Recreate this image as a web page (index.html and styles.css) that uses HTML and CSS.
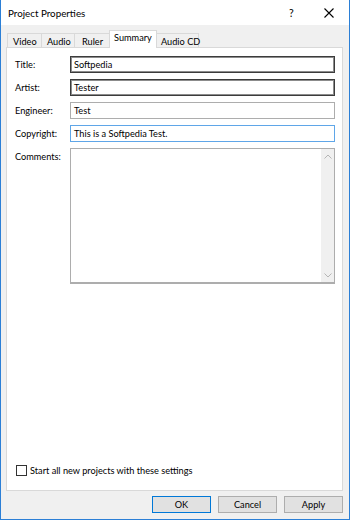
FILE: index.html
```html
<!DOCTYPE html>
<html lang="en">
<head>
    <meta charset="UTF-8">
    <meta name="viewport" content="width=device-width, initial-scale=1.0">
    <title>Project Properties</title>
    <link rel="stylesheet" href="styles.css">
</head>
<body>
    <div class="window">
        <div class="titlebar">
            <span class="title">Project Properties</span>
            <span class="help">?</span>
            <span class="close">
                <svg width="10" height="10" viewBox="0 0 10 10"><path d="M0.5 0.5L9.5 9.5M9.5 0.5L0.5 9.5" stroke="#000" stroke-width="1.1" fill="none"/></svg>
            </span>
        </div>
        <div class="content">
            <div class="tabs">
                <div class="tab tab-video">Video</div>
                <div class="tab tab-audio">Audio</div>
                <div class="tab tab-ruler">Ruler</div>
                <div class="tab tab-summary active">Summary</div>
                <div class="tab tab-cd">Audio CD</div>
            </div>
            <div class="panel">
                <div class="fields">
                    <label class="label">Title:</label>
                    <div class="input dark">Softpedia</div>
                    <label class="label">Artist:</label>
                    <div class="input dark">Tester</div>
                    <label class="label">Engineer:</label>
                    <div class="input">Test</div>
                    <label class="label">Copyright:</label>
                    <div class="input focus">This is a Softpedia Test.</div>
                    <label class="label top">Comments:</label>
                    <div class="memo">
                        <div class="memo-text"></div>
                        <div class="scrollbar">
                            <svg width="8" height="5" viewBox="0 0 8 5"><path d="M0.5 4.5L4 1L7.5 4.5" stroke="#b5b5b5" fill="none"/></svg>
                            <svg width="8" height="5" viewBox="0 0 8 5"><path d="M0.5 0.5L4 4L7.5 0.5" stroke="#b5b5b5" fill="none"/></svg>
                        </div>
                    </div>
                </div>
                <div class="check">
                    <span class="box"></span>
                    <span>Start all new projects with these settings</span>
                </div>
            </div>
            <div class="buttons">
                <button class="btn default">OK</button>
                <button class="btn">Cancel</button>
                <button class="btn">Apply</button>
            </div>
        </div>
    </div>
</body>
</html>
```
FILE: styles.css
```css
body {
    margin: 0;
    font-family: "Segoe UI", Lato, "Liberation Sans", sans-serif;
    font-size: 9.2px;
    color: #000;
}
.window {
    width: 350px;
    height: 520px;
    box-sizing: border-box;
    border: 1px solid #2b7fd6;
    border-top: none;
    background: #f0f0f0;
    display: flex;
    flex-direction: column;
    overflow: hidden;
}
.titlebar {
    height: 25px;
    background: #fff;
    display: flex;
    align-items: center;
    padding-left: 7px;
    font-size: 9.8px;
}
.title {
    flex: 1;
}
.help {
    width: 7px;
    margin-right: 28px;
    font-size: 10.5px;
}
.close {
    display: flex;
    margin-right: 15px;
}
.content {
    flex: 1;
    display: flex;
    flex-direction: column;
    padding: 0 6px 6px 5px;
}
.tabs {
    height: 22px;
    display: flex;
    align-items: flex-end;
    padding-left: 1px;
}
.tab {
    box-sizing: border-box;
    height: 14px;
    line-height: 14px;
    padding: 1px 0 0 5px;
    border: 1px solid #d9d9d9;
    border-bottom: none;
    margin-right: -1px;
    background: #f0f0f0;
    white-space: nowrap;
}
.tab-video {
    width: 35px;
}
.tab-audio {
    width: 34px;
}
.tab-ruler {
    width: 38px;
    padding-left: 7px;
}
.tab-cd {
    width: 44px;
}
.tab.active {
    position: relative;
    z-index: 1;
    width: 48px;
    height: 18px;
    line-height: 14px;
    padding: 0 0 0 4px;
    background: #fff;
    margin: 0 -2px -1px -2px;
}
.panel {
    flex: 1;
    background: #fff;
    border: 1px solid #d9d9d9;
    display: flex;
    flex-direction: column;
    padding: 8px 7px 14px 8px;
}
.fields {
    display: grid;
    grid-template-columns: 55px 1fr;
    grid-template-rows: 17px 17px 17px 17px 136px;
    row-gap: 6px;
}
.label {
    display: flex;
    align-items: center;
}
.label.top {
    align-items: flex-start;
    padding-top: 3px;
}
.input {
    box-sizing: border-box;
    border: 1px solid #adadad;
    padding-left: 3px;
    display: flex;
    align-items: center;
    background: #fff;
}
.input.dark {
    border: 1px solid #3c3c3c;
    box-shadow: inset 0 0 0 1px #8c8c8c;
}
.input.focus {
    border-color: #5fa6e8;
}
.memo {
    box-sizing: border-box;
    border: 1px solid #adadad;
    border-bottom-width: 2px;
    display: flex;
}
.memo-text {
    flex: 1;
}
.scrollbar {
    width: 13px;
    background: #f0f0f0;
    display: flex;
    flex-direction: column;
    justify-content: space-between;
    align-items: center;
    padding: 5px 0 4px;
}
.check {
    margin-top: auto;
    display: flex;
    align-items: center;
    gap: 3px;
    padding-left: 1px;
}
.box {
    width: 9px;
    height: 9px;
    border: 1px solid #333;
    background: #fff;
}
.buttons {
    display: flex;
    justify-content: flex-end;
    gap: 7px;
    margin-top: 5px;
    height: 17px;
}
.btn {
    width: 59px;
    height: 17px;
    box-sizing: border-box;
    border: 1px solid #adadad;
    background: #e1e1e1;
    font-family: inherit;
    font-size: 9.2px;
    padding: 0;
}
.btn.default {
    border-color: #0078d7;
}
```
